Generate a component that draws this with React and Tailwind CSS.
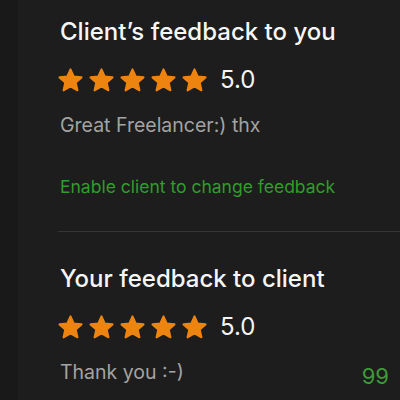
// One filled star; the round stroke softens the points a little.
function Star() {
  return (
    <svg width="25" height="24" viewBox="1 1 22 21" className="shrink-0">
      <path
        d="M12 2.2l2.9 6.3 6.8.7-5.1 4.6 1.5 6.8L12 17.1l-6.1 3.5 1.5-6.8-5.1-4.6 6.8-.7z"
        fill="#ee8410"
        stroke="#ee8410"
        strokeWidth="1.8"
        strokeLinejoin="round"
      />
    </svg>
  )
}

function Rating({ value }) {
  return (
    <div className="flex items-center h-[24px] -ml-[2px]">
      <div className="flex gap-[6px]">
        {[0, 1, 2, 3, 4].map(i => <Star key={i} />)}
      </div>
      <span className="ml-[13px] text-[24px] leading-[24px] text-[#f4f4f4]">{value}</span>
    </div>
  )
}

export default function App() {
  return (
    <div className="flex w-[400px] h-[400px] overflow-hidden bg-[#1d1d1d]" style={{ fontFamily: 'Inter, "Liberation Sans", sans-serif' }}>
      <div className="w-[18px] shrink-0 bg-[#191919]" />
      <div className="flex-1 flex flex-col pt-[18px] pl-[42px]">
        <h2 className="text-[24px] leading-[28px] font-medium text-[#f6f6f6]">Client’s feedback to you</h2>
        <div className="mt-[22px]">
          <Rating value="5.0" />
        </div>
        <p className="mt-[21px] text-[19.5px] leading-[24px] text-[#a3a3a3]">Great Freelancer:) thx</p>
        <p className="mt-[38px] text-[17.5px] leading-[24px] text-[#2f9d2a]">Enable client to change feedback</p>

        <div className="mt-[32px] -ml-[2px] h-[1px] bg-[#363636]" />

        <h2 className="mt-[33px] text-[24px] leading-[28px] font-medium text-[#f6f6f6]">Your feedback to client</h2>
        <div className="mt-[22px]">
          <Rating value="5.0" />
        </div>
        <div className="mt-[21px] flex justify-between items-start pr-[11px]">
          <p className="text-[19.5px] leading-[24px] text-[#a3a3a3]">Thank you :-)</p>
          <span className="mt-[4px] text-[22px] leading-[24px] text-[#3f9b38]">99</span>
        </div>
      </div>
    </div>
  )
}
